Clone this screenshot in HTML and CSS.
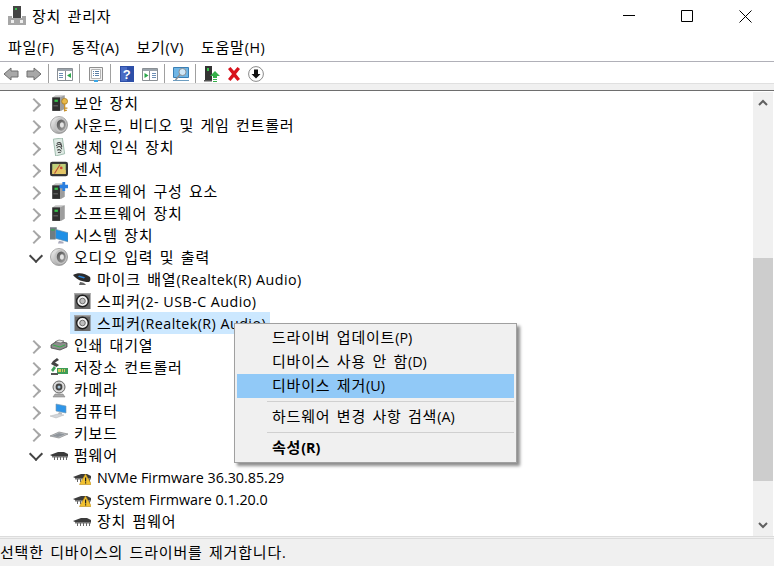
FILE: index.html
```html
<!DOCTYPE html>
<html lang="ko">
<head>
<meta charset="utf-8">
<title>장치 관리자</title>
<link rel="stylesheet" href="styles.css">
</head>
<body>
<svg class="defs" width="0" height="0" aria-hidden="true">
  <defs>
    <linearGradient id="sp" x1="0" y1="0" x2="1" y2="1"><stop offset="0" stop-color="#f4f4f4"/><stop offset="1" stop-color="#8a8a8a"/></linearGradient>
    <linearGradient id="cone" x1="0" y1="0" x2="1" y2="1"><stop offset="0" stop-color="#4a4a4a"/><stop offset="1" stop-color="#a8a8a8"/></linearGradient>
    <symbol id="tower" viewBox="0 0 16 16"><path d="M2 3l3-2h8v12l-3 2H2z" fill="#c4c4c4"/><path d="M2 3h7v12H2z" fill="#2e2e2e"/><path d="M9 3l4-2v12l-4 2z" fill="#9d9d9d"/><path d="M4 5h3v2H4z" fill="#37c24b"/><path d="M3 10h4v1H3z" fill="#6a6a6a"/></symbol>
    <symbol id="sec" viewBox="0 0 16 16"><use href="#tower"/><circle cx="13" cy="6.500" r="2.600" fill="#e9b949" stroke="#a77a1d" stroke-width=".7"/><path d="M12.400 8.500h1.200v7h-1.200zM13.500 12h2v1h-2zM13.500 14h1.500v1h-1.500z" fill="#c8912a"/></symbol>
    <symbol id="swc" viewBox="0 0 16 16"><use href="#tower"/><path d="M11 0h2.500v2.500H16v3h-2.500V8H11V5.500H8.500v-3H11z" fill="#2a7fe0"/></symbol>
    <symbol id="speaker" viewBox="0 0 16 16"><circle cx="8" cy="8" r="7.600" fill="url(#sp)" stroke="#8c8c8c" stroke-width=".6"/><ellipse cx="9.500" cy="8" rx="5.400" ry="6.400" fill="#c4c4c4"/><ellipse cx="10" cy="8" rx="4" ry="5" fill="url(#cone)"/><ellipse cx="10.600" cy="8" rx="1.800" ry="2.400" fill="#e4e4e4"/></symbol>
    <symbol id="finger" viewBox="0 0 16 16"><path d="M3 1l8-1 2 14-8 2z" fill="#dfeae4" stroke="#8fb0a0" stroke-width=".7"/><path d="M6 5c2-2 4-1 4 1M5.500 7c2-2 5-2 5 1M6 9c1-2 4-2 4.500 1M6.500 11c1-1 3-1 3.500 1M7 13c1-.5 2-.5 2.500 0" fill="none" stroke="#444" stroke-width=".9"/></symbol>
    <symbol id="sensor" viewBox="0 0 16 16"><rect x="0" y="1.500" width="16" height="13" rx="2" fill="#333"/><rect x="2" y="3.500" width="12" height="9" fill="#bfd07a"/><path d="M2 9l5-3 7 3v3.500H2z" fill="#e4c667"/><path d="M4 12l5-8" stroke="#b8503a"/><circle cx="10" cy="7" r="1.200" fill="#d24a2e"/></symbol>
    <symbol id="system" viewBox="0 0 16 16"><path d="M5 3l11 3v8L5 11z" fill="#1e8fe6" stroke="#6d8fa8" stroke-width=".6"/><path d="M0 1h6v2H5v9H0z" fill="#6f7c82"/><path d="M1 3h3v1H1z" fill="#2cb34a"/><path d="M8 13l4 1v1.500H7z" fill="#aab"/></symbol>
    <symbol id="mic" viewBox="0 0 18 16"><path d="M0 4c5-3 12-2 17 2 1 3 0 5-2 5-5 0-11-2-15-7z" fill="#2b2b2b"/><path d="M6 4.500l6 1.800-1 1.200-6-1.800z" fill="#2b84d8"/><path d="M7 11c2 0 5 1 6 3H6z" fill="#666"/></symbol>
    <symbol id="box" viewBox="-1.500 -1 18 18"><path d="M0 0h16v16H0z" fill="#6a6a6a"/><path d="M0 0h16v1.500H0z" fill="#a4a4a4"/><circle cx="8" cy="8" r="5.800" fill="#f4f4f4" stroke="#1e1e1e" stroke-width="1.400"/><circle cx="8" cy="8" r="2.800" fill="#bdbdbd" stroke="#555" stroke-width=".8"/></symbol>
    <symbol id="printer" viewBox="0 0 18 16"><path d="M1 8l6-4 10 2v4l-7 3-9-2z" fill="#8c8c8c" stroke="#333" stroke-width=".7"/><path d="M5 5l4-2 5 1-3 2z" fill="#e8e8e8" stroke="#555" stroke-width=".6"/><path d="M3 8l7 2 5-2" fill="none" stroke="#35b04a"/></symbol>
    <symbol id="storage" viewBox="0 0 18 18"><path d="M3 3l4-3 2 2-4 2.500 4 2.500-2.500 2L1 6z" fill="#444"/><path d="M1 12l3-4 2 2-3 4zM7 10h11v6H7z" fill="#3e9e58"/><path d="M8 11h3v3H8zM12 11h1v3h-1zM14 11h1v3h-1z" fill="#d4c45a"/><path d="M1 15h7v2H1z" fill="#555"/></symbol>
    <symbol id="camera" viewBox="0 0 16 18"><circle cx="8" cy="7" r="6" fill="#d8d8d8" stroke="#666"/><circle cx="8" cy="7" r="3.400" fill="#444"/><circle cx="8" cy="7" r="1.500" fill="#a8c4d8"/><path d="M4 14h8l2 3H2z" fill="#aaa" stroke="#777" stroke-width=".5"/></symbol>
    <symbol id="pc" viewBox="0 0 18 16"><path d="M6 1l10 2v7L6 8z" fill="#2f95e8" stroke="#7a98ad" stroke-width=".6"/><path d="M9 9l3 .5v2L8 11z" fill="#b5bcc2"/><path d="M0 13l8-2 6 1-8 3z" fill="#d3d6da" stroke="#aaa" stroke-width=".4"/></symbol>
    <symbol id="kbd" viewBox="0 0 18 16"><path d="M0 11l9-4 9 2-9 4z" fill="#c0c4c8" stroke="#777" stroke-width=".6"/><path d="M2 11l7-3 6 1.500-7 2.500z" fill="#8e949a"/></symbol>
    <symbol id="chip" viewBox="0 0 18 16"><path d="M0 8l8-3h6l4 2v2H2z" fill="#3c3c3c"/><path d="M2 9h16v1.500H2z" fill="#777"/><path d="M4 10h1v3H4zM7 10h1v3H7zM10 10h1v3h-1zM13 10h1v3h-1zM16 10h1v3h-1z" fill="#666"/></symbol>
    <symbol id="warn" viewBox="0 0 18 16"><use href="#chip"/><path d="M12.500 5L18.500 15.500H6.500z" fill="#f2c230" stroke="#b88a12" stroke-width=".6"/><path d="M12 8.500h1.200v4H12zM12 13.200h1.200v1.200H12z" fill="#222"/></symbol>
  </defs>
</svg>

<div class="win">
  <header class="titlebar">
    <svg class="appicon" viewBox="0 0 18 20"><path d="M5 0h8v12H5z" fill="#444"/><path d="M7 2h2v2H7z" fill="#35c04c"/><path d="M0 10h4v2h10v-2h4v9H0z" fill="#a6a6a6"/><path d="M3 14h3v3H3zM12 14h3v3h-3z" fill="#eee"/></svg>
    <span class="title">장치 관리자</span>
    <div class="winbtns">
      <span class="winbtn"><svg width="12" height="12" viewBox="0 0 12 12"><path d="M0 5.500h12" stroke="#000"/></svg></span>
      <span class="winbtn"><svg width="12" height="12" viewBox="0 0 12 12"><path d="M.5.5h11v11H.5z" fill="none" stroke="#000"/></svg></span>
      <span class="winbtn"><svg width="13" height="13" viewBox="0 0 13 13"><path d="M.5.500l12 12M12.500.500l-12 12" stroke="#000"/></svg></span>
    </div>
  </header>
  <nav class="menubar">
    <span>파일<span class="en">(F)</span></span><span>동작<span class="en">(A)</span></span><span>보기<span class="en">(V)</span></span><span>도움말<span class="en">(H)</span></span>
  </nav>
  <div class="toolbar">
    <svg class="tool t-nav" viewBox="0 0 16 16"><path d="M8 2v3h7v6H8v3L1 8z" fill="#a8a8a8" stroke="#6e6e6e"/></svg>
    <svg class="tool t-nav" viewBox="0 0 16 16"><path d="M8 2v3H1v6h7v3l7-6z" fill="#a8a8a8" stroke="#6e6e6e"/></svg>
    <i class="tsep"></i>
    <svg class="tool" viewBox="0 0 16 16"><path d="M.500 2.500h15v12H.500z" fill="#fff" stroke="#8a8f94"/><path d="M1 3h14v2H1z" fill="#9aa3ab"/><path d="M8.500 5v9" stroke="#8a8f94"/><path d="M2 7h4v1H2zM2 9h4v1H2zM2 11h4v1H2z" fill="#6d8fb5"/><path d="M14 7v5l-4-2.500z" fill="#2aa84a"/></svg>
    <i class="tsep"></i>
    <svg class="tool" viewBox="0 0 16 16"><path d="M1.500 1.500h13v13h-13z" fill="#f2f2f2" stroke="#8f8f8f"/><path d="M3.500 3.500h9v9h-9z" fill="#fff" stroke="#b5b5b5"/><path d="M5 5h1v1H5zM7 5h4v1H7zM5 7h1v1H5zM7 7h4v1H7zM5 9h1v1H5zM7 9h4v1H7z" fill="#5b7fa6"/><path d="M6 14h4v2H6z" fill="#3aa8e8"/></svg>
    <i class="tsep"></i>
    <svg class="tool t-help" viewBox="0 0 14 16"><path d="M0 0h14v16H0z" fill="#2d4fa8"/><path d="M1 1h6v14H1z" fill="#4a6cc4"/><text x="7" y="13" class="helpq">?</text></svg>
    <svg class="tool t-after" viewBox="0 0 16 16"><path d="M.500 2.500h15v12H.500z" fill="#fff" stroke="#8a8f94"/><path d="M1 3h14v2H1z" fill="#9aa3ab"/><path d="M7.500 5v9" stroke="#8a8f94"/><path d="M10 7h4v1h-4zM10 9h4v1h-4zM10 11h4v1h-4z" fill="#6d8fb5"/><path d="M2.500 7v5l4-2.500z" fill="#2aa84a"/></svg>
    <i class="tsep"></i>
    <svg class="tool" viewBox="0 0 16 16"><path d="M.500 1.500h15v10H.500z" fill="#6fb6e6" stroke="#3a7fb5"/><path d="M0 14h16v1H0z" fill="#6d9dc0"/><circle cx="9.500" cy="6" r="3.600" fill="#cfe7f7" stroke="#8a8f94"/><path d="M7 8.500L2.500 14" stroke="#8a8f94" stroke-width="1.500"/></svg>
    <i class="tsep"></i>
    <svg class="tool" viewBox="0 0 16 16"><path d="M1 0h7v14H1z" fill="#333"/><path d="M3 2h2v3H3z" fill="#37c24b"/><path d="M0 14h8v1.500H0z" fill="#555"/><path d="M11 5l5 5h-3v2H9v-2H6z" fill="#35b04a"/><path d="M9 13h4v1H9zM9 15h4v1H9z" fill="#35b04a"/></svg>
    <svg class="tool t-x" viewBox="0 0 16 16"><path d="M2 3l2.500-2L8 5l3.500-4L14 3l-4 5 4 5-2.500 2L8 11l-3.500 4L2 13l4-5z" fill="#d8121c"/></svg>
    <svg class="tool t-down" viewBox="0 0 16 16"><circle cx="8" cy="8" r="7.400" fill="#fff" stroke="#8a8a8a"/><path d="M6 3.500h4V8h2.500L8 12.500 3.500 8H6z" fill="#111"/></svg>
  </div>
  <div class="strip"></div>

  <div class="body">
    <main class="tree">
      <div class="row"><i class="chev"></i><svg class="ico"><use href="#sec"/></svg><span class="lbl">보안 장치</span></div>
      <div class="row"><i class="chev"></i><svg class="ico"><use href="#speaker"/></svg><span class="lbl">사운드, 비디오 및 게임 컨트롤러</span></div>
      <div class="row"><i class="chev"></i><svg class="ico"><use href="#finger"/></svg><span class="lbl">생체 인식 장치</span></div>
      <div class="row"><i class="chev"></i><svg class="ico"><use href="#sensor"/></svg><span class="lbl">센서</span></div>
      <div class="row"><i class="chev"></i><svg class="ico"><use href="#swc"/></svg><span class="lbl">소프트웨어 구성 요소</span></div>
      <div class="row"><i class="chev"></i><svg class="ico"><use href="#tower"/></svg><span class="lbl">소프트웨어 장치</span></div>
      <div class="row"><i class="chev"></i><svg class="ico"><use href="#system"/></svg><span class="lbl">시스템 장치</span></div>
      <div class="row"><i class="chev open"></i><svg class="ico"><use href="#speaker"/></svg><span class="lbl">오디오 입력 및 출력</span></div>
      <div class="row child"><span class="item"><svg class="ico"><use href="#mic"/></svg><span class="lbl">마이크 배열<span class="en">(Realtek(R) Audio)</span></span></span></div>
      <div class="row child"><span class="item"><svg class="ico"><use href="#box"/></svg><span class="lbl">스피커<span class="en">(2- USB-C Audio)</span></span></span></div>
      <div class="row child"><span class="item sel"><svg class="ico"><use href="#box"/></svg><span class="lbl">스피커<span class="en">(Realtek(R) Audio)</span></span></span></div>
      <div class="row"><i class="chev"></i><svg class="ico"><use href="#printer"/></svg><span class="lbl">인쇄 대기열</span></div>
      <div class="row"><i class="chev"></i><svg class="ico"><use href="#storage"/></svg><span class="lbl">저장소 컨트롤러</span></div>
      <div class="row"><i class="chev"></i><svg class="ico"><use href="#camera"/></svg><span class="lbl">카메라</span></div>
      <div class="row"><i class="chev"></i><svg class="ico"><use href="#pc"/></svg><span class="lbl">컴퓨터</span></div>
      <div class="row"><i class="chev"></i><svg class="ico"><use href="#kbd"/></svg><span class="lbl">키보드</span></div>
      <div class="row"><i class="chev open"></i><svg class="ico"><use href="#chip"/></svg><span class="lbl">펌웨어</span></div>
      <div class="row child"><span class="item"><svg class="ico"><use href="#warn"/></svg><span class="lbl"><span class="en fw">NVMe Firmware 36.30.85.29</span></span></span></div>
      <div class="row child"><span class="item"><svg class="ico"><use href="#warn"/></svg><span class="lbl"><span class="en fw">System Firmware 0.1.20.0</span></span></span></div>
      <div class="row child"><span class="item"><svg class="ico"><use href="#chip"/></svg><span class="lbl">장치 펌웨어</span></span></div>
    </main>
    <aside class="scrollbar">
      <span class="sbtn"><svg width="10" height="7" viewBox="0 0 10 7"><path d="M1 6l4-4 4 4" fill="none" stroke="#606060" stroke-width="2"/></svg></span>
      <div class="track"><div class="thumb"></div></div>
      <span class="sbtn"><svg width="10" height="7" viewBox="0 0 10 7"><path d="M1 1l4 4 4-4" fill="none" stroke="#606060" stroke-width="2"/></svg></span>
    </aside>
  </div>

  <footer class="status"><span>선택한 디바이스의 드라이버를 제거합니다<span class="en fw">.</span></span></footer>

  <div class="ctx">
    <div class="ci">드라이버 업데이트<span class="en fw">(P)</span></div>
    <div class="ci">디바이스 사용 안 함<span class="en fw">(D)</span></div>
    <div class="ci hot">디바이스 제거<span class="en fw">(U)</span></div>
    <div class="csep"></div>
    <div class="ci">하드웨어 변경 사항 검색<span class="en fw">(A)</span></div>
    <div class="csep"></div>
    <div class="ci strong">속성<span class="en fw">(R)</span></div>
  </div>
</div>
</body>
</html>
```

FILE: styles.css
```css
* { box-sizing: border-box; }
html, body { margin: 0; padding: 0; background: #fff; }
body { font-family: "Noto Sans CJK KR", sans-serif; font-size: 15px; letter-spacing: .8px; word-spacing: 1.4px; color: #000; line-height: 20px; }
.en { font-family: "Open Sans", sans-serif; font-size: 14.3px; letter-spacing: .45px; word-spacing: 0; }
.en.fw { letter-spacing: 0; }
.defs { position: absolute; }
.win { position: relative; width: 774px; height: 566px; display: flex; flex-direction: column; overflow: hidden; background: #fff; }

.titlebar { height: 32px; display: flex; align-items: center; padding-left: 8px; flex: none; }
.appicon { width: 18px; height: 20px; }
.title { margin: -1px 0 0 6px; }
.winbtns { margin-left: auto; display: flex; }
.winbtn { width: 58px; height: 32px; display: flex; align-items: center; justify-content: center; }

.menubar { height: 30px; display: flex; gap: 17px; padding: 2px 0 0 8px; align-items: center; flex: none; border-bottom: 1px solid #b0b0b8; margin-bottom: 0; }

.toolbar { height: 21px; display: flex; align-items: center; padding: 2px 0 0 3px; flex: none; }
.tool { width: 16px; height: 16px; flex: none; }
.t-nav + .t-nav { margin-left: 7px; }
.tsep { width: 1px; height: 19px; background: #a0a0a0; margin: 0 8px 0 6px; flex: none; }
.t-help { width: 14px; margin-left: 1px; }
.helpq { fill: #fff; font: bold 13px "Liberation Sans", sans-serif; text-anchor: middle; }
.t-after { margin-left: 8px; }
.t-x { margin-left: 6px; }
.t-down { margin-left: 6px; }

.strip { height: 8px; flex: none; background: #f0f0f0; border-top: 1px solid #e0e0e0; border-bottom: 1px solid #6e6e6e; }

.body { flex: 1; min-height: 0; display: flex; padding-top: 1px; }
.tree { flex: 1; min-width: 0; }
.row { height: 22px; display: flex; align-items: center; }
.chev { width: 16px; height: 16px; margin-left: 28px; margin-right: 6px; flex: none; position: relative; }
.chev::before { content: ""; position: absolute; left: 1px; top: 5px; width: 8px; height: 8px; border-top: 2px solid #a6a6a6; border-right: 2px solid #a6a6a6; transform: rotate(45deg); }
.chev.open::before { left: 3px; top: 2px; width: 8px; height: 8px; border-color: #444; transform: rotate(135deg); }
.ico { width: 18px; height: 18px; flex: none; }
.lbl { margin-left: 6px; white-space: nowrap; }
.child { padding-left: 70px; }
.item { height: 22px; display: inline-flex; align-items: center; padding-left: 3px; padding-right: 4px; }
.sel { background: #cce8ff; }

.scrollbar { width: 20px; margin-right: 1px; flex: none; display: flex; flex-direction: column; background: #f0f0f0; }
.sbtn { height: 21px; display: flex; align-items: center; justify-content: center; flex: none; }
.track { flex: 1; }
.thumb { margin-top: 145px; height: 223px; background: #cdcdcd; }

.status { height: 30px; flex: none; display: flex; align-items: center; background: #f0f0f0; border-top: 3px double #dcdcdc; }

.ctx { position: absolute; left: 234px; top: 323px; width: 283px; height: 140px; background: #f0f0f0; border: 1px solid #a0a0a0; padding: 2px; box-shadow: 3px 3px 3px rgba(0,0,0,.45); }
.ci { height: 24px; line-height: 22px; padding-left: 35px; }
.hot { background: #91c9f7; }
.strong { font-weight: 700; }
.csep { height: 1px; background: #d0d0d0; margin: 3px 0 3px 30px; }
```
